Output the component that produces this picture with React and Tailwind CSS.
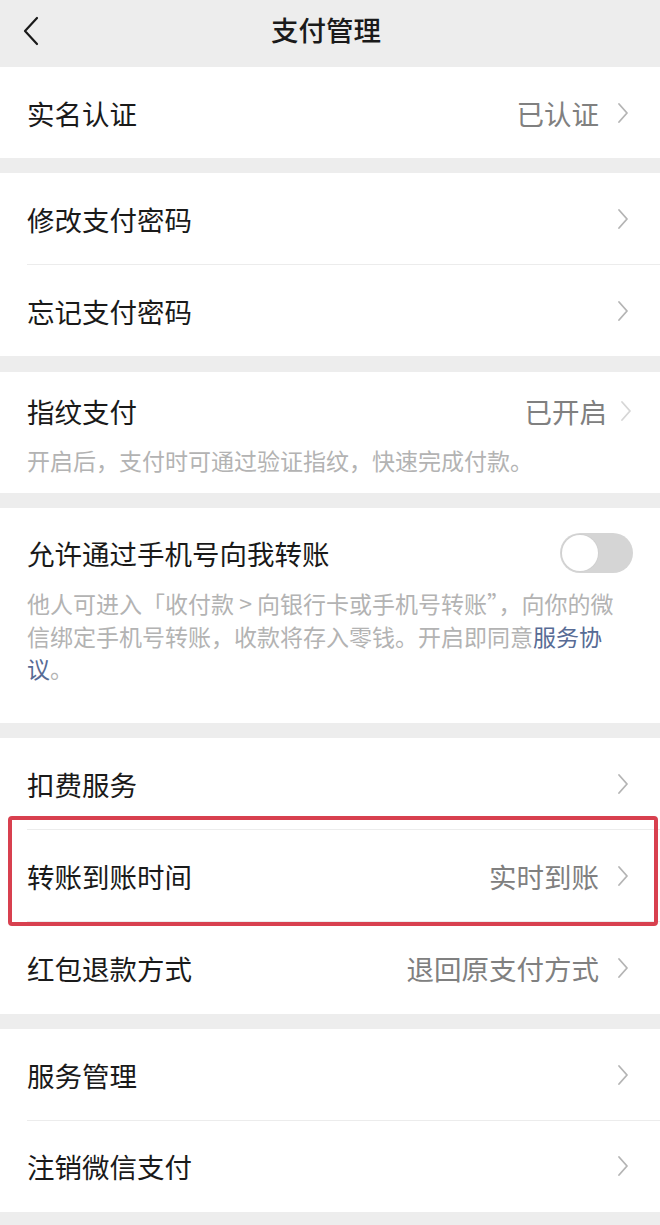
import React from "react";

const font = { fontFamily: '"Noto Sans CJK SC", "Noto Sans", sans-serif' };

function Chevron({ light }) {
  return (
    <svg width="12" height="22" viewBox="0 0 12 22" className="shrink-0">
      <path
        d="M2 2 L10 11 L2 20"
        fill="none"
        stroke={light ? "#d6d6d6" : "#b4b4b4"}
        strokeWidth="1.8"
        strokeLinecap="round"
        strokeLinejoin="round"
      />
    </svg>
  );
}

function Row({ label, value, divider, h = "h-[92px]" }) {
  return (
    <div className={`relative flex ${h} items-center justify-between pl-[27px] pr-[31px]`}>
      <span className="text-[27.5px] leading-[36px] text-[#1a1a1a]">{label}</span>
      <div className="flex items-center gap-[18px]">
        {value && <span className="text-[27.5px] leading-[36px] text-[#808080]">{value}</span>}
        <Chevron />
      </div>
      {divider && <div className="absolute bottom-0 left-[27px] right-0 h-px bg-[#ececec]" />}
    </div>
  );
}

function Gap({ h = "h-[15px]" }) {
  return <div className={`${h} bg-[#ededed]`} />;
}

export default function App() {
  return (
    <div className="w-[660px] h-[1225px] overflow-hidden bg-[#ededed]" style={font}>
      {/* Header */}
      <div className="grid h-[67px] grid-cols-[80px_1fr_80px] items-center bg-[#ededed]">
        <div className="flex items-center pl-[22px] -mt-[6px]">
          <svg width="18" height="30" viewBox="0 0 18 30">
            <path d="M15 2 L3 15 L15 28" fill="none" stroke="#1a1a1a" strokeWidth="2.2" strokeLinecap="round" strokeLinejoin="round" />
          </svg>
        </div>
        <div className="-ml-[8px] -mt-[10px] text-center text-[27.5px] font-medium leading-[36px] text-[#1a1a1a]">支付管理</div>
        <div />
      </div>

      {/* Section 1 */}
      <div className="bg-white">
        <Row label="实名认证" value="已认证" h="h-[91px]" />
      </div>
      <Gap />

      {/* Section 2 */}
      <div className="bg-white">
        <Row label="修改支付密码" divider h="h-[92px]" />
        <Row label="忘记支付密码" h="h-[91px]" />
      </div>
      <Gap h="h-[16px]" />

      {/* Section 3 */}
      <div className="bg-white pt-[22px] pb-[17px] pl-[27px] pr-[28px]">
        <div className="flex h-[34px] items-center justify-between">
          <span className="text-[27.5px] leading-[36px] text-[#1a1a1a]">指纹支付</span>
          <div className="flex items-center gap-[13px]">
            <span className="text-[27.5px] leading-[36px] text-[#808080]">已开启</span>
            <Chevron light />
          </div>
        </div>
        <p className="mt-[16px] text-[23px] leading-[32px] text-[#b3b3b3]">开启后，支付时可通过验证指纹，快速完成付款。</p>
      </div>
      <Gap />

      {/* Section 4 */}
      <div className="bg-white pt-[25px] pb-[38px] pl-[27px] pr-[27px]">
        <div className="flex h-[40px] items-center justify-between">
          <span className="text-[27.5px] leading-[36px] text-[#1a1a1a]">允许通过手机号向我转账</span>
          <div className="flex h-[40px] w-[73px] items-center rounded-full bg-[#d5d5d5] p-[2px]">
            <div className="h-[36px] w-[36px] rounded-full bg-white shadow-[0_0_0_1px_#d0d0d0]" />
          </div>
        </div>
        <p className="mt-[14px] text-[23px] leading-[32.5px] text-[#b3b3b3] whitespace-nowrap">
          他人可进入「收付款 &gt; 向银行卡或手机号转账”，向你的微
          <br />
          信绑定手机号转账，收款将存入零钱。开启即同意<span className="text-[#576b95]">服务协</span>
          <br />
          <span className="text-[#576b95]">议</span>。
        </p>
      </div>
      <Gap />

      {/* Section 5 */}
      <div className="relative bg-white">
        <Row label="扣费服务" divider />
        <Row label="转账到账时间" value="实时到账" divider />
        <Row label="红包退款方式" value="退回原支付方式" />
        <div className="pointer-events-none absolute left-[8px] right-[2px] top-[78px] h-[110px] rounded-[4px] border-[4px] border-[#d8404f]" />
      </div>
      <Gap />

      {/* Section 6 */}
      <div className="bg-white">
        <Row label="服务管理" divider />
        <Row label="注销微信支付" h="h-[91px]" />
      </div>
      <Gap h="h-[12px]" />
    </div>
  );
}
